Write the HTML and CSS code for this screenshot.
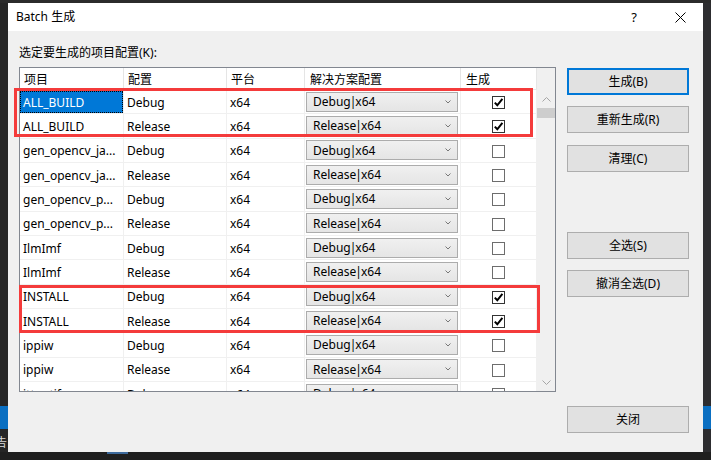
FILE: index.html
```html
<!DOCTYPE html>
<html lang="zh-CN">
<head>
<meta charset="utf-8">
<title>Batch 生成</title>
<link rel="stylesheet" href="styles.css">
</head>
<body>
<div class="screen">
  <div class="top-strip"></div>
  <div class="middle">
    <div class="side side-left"><div class="side-blue"></div><div class="side-glyph">告</div></div>
    <div class="dialog">
      <div class="titlebar">
        <span class="title">Batch 生成</span>
        <div class="title-buttons">
          <span class="tb-btn">?</span>
          <span class="tb-btn"><svg width="11" height="11" viewBox="0 0 11 11"><path d="M0.5 0.5 L10.5 10.5 M10.5 0.5 L0.5 10.5" stroke="#000" stroke-width="1" fill="none"/></svg></span>
        </div>
      </div>
      <div class="dialog-body">
        <div class="prompt">选定要生成的项目配置(K):</div>
        <div class="main">
          <div class="list">
            <div class="grid">
              <div class="row header">
                <div class="cell c1">项目</div><div class="cell c2">配置</div><div class="cell c3">平台</div><div class="cell c4 hpad">解决方案配置</div><div class="cell c5 hpad">生成</div>
              </div>
              <div class="row">
                <div class="cell c1 selected"><span class="focus">ALL_BUILD</span></div><div class="cell c2">Debug</div><div class="cell c3">x64</div>
                <div class="cell c4"><div class="combo"><span class="combo-text">Debug<span class="bar">|</span>x64</span><svg class="chev" width="6" height="4" viewBox="0 0 6 4"><polyline points="0.5,0.5 3,3 5.5,0.5" fill="none" stroke="#777" stroke-width="1"/></svg></div></div>
                <div class="cell c5"><span class="check on"><svg width="11" height="11" viewBox="0 0 11 11"><path d="M1.8 5.6 L4.3 8.3 L9.4 1.8" fill="none" stroke="#000" stroke-width="2"/></svg></span></div>
              </div>
              <div class="row">
                <div class="cell c1">ALL_BUILD</div><div class="cell c2">Release</div><div class="cell c3">x64</div>
                <div class="cell c4"><div class="combo"><span class="combo-text">Release<span class="bar">|</span>x64</span><svg class="chev" width="6" height="4" viewBox="0 0 6 4"><polyline points="0.5,0.5 3,3 5.5,0.5" fill="none" stroke="#777" stroke-width="1"/></svg></div></div>
                <div class="cell c5"><span class="check on"><svg width="11" height="11" viewBox="0 0 11 11"><path d="M1.8 5.6 L4.3 8.3 L9.4 1.8" fill="none" stroke="#000" stroke-width="2"/></svg></span></div>
              </div>
              <div class="row">
                <div class="cell c1">gen_opencv_ja...</div><div class="cell c2">Debug</div><div class="cell c3">x64</div>
                <div class="cell c4"><div class="combo"><span class="combo-text">Debug<span class="bar">|</span>x64</span><svg class="chev" width="6" height="4" viewBox="0 0 6 4"><polyline points="0.5,0.5 3,3 5.5,0.5" fill="none" stroke="#777" stroke-width="1"/></svg></div></div>
                <div class="cell c5"><span class="check"></span></div>
              </div>
              <div class="row">
                <div class="cell c1">gen_opencv_ja...</div><div class="cell c2">Release</div><div class="cell c3">x64</div>
                <div class="cell c4"><div class="combo"><span class="combo-text">Release<span class="bar">|</span>x64</span><svg class="chev" width="6" height="4" viewBox="0 0 6 4"><polyline points="0.5,0.5 3,3 5.5,0.5" fill="none" stroke="#777" stroke-width="1"/></svg></div></div>
                <div class="cell c5"><span class="check"></span></div>
              </div>
              <div class="row">
                <div class="cell c1">gen_opencv_p...</div><div class="cell c2">Debug</div><div class="cell c3">x64</div>
                <div class="cell c4"><div class="combo"><span class="combo-text">Debug<span class="bar">|</span>x64</span><svg class="chev" width="6" height="4" viewBox="0 0 6 4"><polyline points="0.5,0.5 3,3 5.5,0.5" fill="none" stroke="#777" stroke-width="1"/></svg></div></div>
                <div class="cell c5"><span class="check"></span></div>
              </div>
              <div class="row">
                <div class="cell c1">gen_opencv_p...</div><div class="cell c2">Release</div><div class="cell c3">x64</div>
                <div class="cell c4"><div class="combo"><span class="combo-text">Release<span class="bar">|</span>x64</span><svg class="chev" width="6" height="4" viewBox="0 0 6 4"><polyline points="0.5,0.5 3,3 5.5,0.5" fill="none" stroke="#777" stroke-width="1"/></svg></div></div>
                <div class="cell c5"><span class="check"></span></div>
              </div>
              <div class="row">
                <div class="cell c1">IlmImf</div><div class="cell c2">Debug</div><div class="cell c3">x64</div>
                <div class="cell c4"><div class="combo"><span class="combo-text">Debug<span class="bar">|</span>x64</span><svg class="chev" width="6" height="4" viewBox="0 0 6 4"><polyline points="0.5,0.5 3,3 5.5,0.5" fill="none" stroke="#777" stroke-width="1"/></svg></div></div>
                <div class="cell c5"><span class="check"></span></div>
              </div>
              <div class="row">
                <div class="cell c1">IlmImf</div><div class="cell c2">Release</div><div class="cell c3">x64</div>
                <div class="cell c4"><div class="combo"><span class="combo-text">Release<span class="bar">|</span>x64</span><svg class="chev" width="6" height="4" viewBox="0 0 6 4"><polyline points="0.5,0.5 3,3 5.5,0.5" fill="none" stroke="#777" stroke-width="1"/></svg></div></div>
                <div class="cell c5"><span class="check"></span></div>
              </div>
              <div class="row">
                <div class="cell c1">INSTALL</div><div class="cell c2">Debug</div><div class="cell c3">x64</div>
                <div class="cell c4"><div class="combo"><span class="combo-text">Debug<span class="bar">|</span>x64</span><svg class="chev" width="6" height="4" viewBox="0 0 6 4"><polyline points="0.5,0.5 3,3 5.5,0.5" fill="none" stroke="#777" stroke-width="1"/></svg></div></div>
                <div class="cell c5"><span class="check on"><svg width="11" height="11" viewBox="0 0 11 11"><path d="M1.8 5.6 L4.3 8.3 L9.4 1.8" fill="none" stroke="#000" stroke-width="2"/></svg></span></div>
              </div>
              <div class="row">
                <div class="cell c1">INSTALL</div><div class="cell c2">Release</div><div class="cell c3">x64</div>
                <div class="cell c4"><div class="combo"><span class="combo-text">Release<span class="bar">|</span>x64</span><svg class="chev" width="6" height="4" viewBox="0 0 6 4"><polyline points="0.5,0.5 3,3 5.5,0.5" fill="none" stroke="#777" stroke-width="1"/></svg></div></div>
                <div class="cell c5"><span class="check on"><svg width="11" height="11" viewBox="0 0 11 11"><path d="M1.8 5.6 L4.3 8.3 L9.4 1.8" fill="none" stroke="#000" stroke-width="2"/></svg></span></div>
              </div>
              <div class="row">
                <div class="cell c1">ippiw</div><div class="cell c2">Debug</div><div class="cell c3">x64</div>
                <div class="cell c4"><div class="combo"><span class="combo-text">Debug<span class="bar">|</span>x64</span><svg class="chev" width="6" height="4" viewBox="0 0 6 4"><polyline points="0.5,0.5 3,3 5.5,0.5" fill="none" stroke="#777" stroke-width="1"/></svg></div></div>
                <div class="cell c5"><span class="check"></span></div>
              </div>
              <div class="row">
                <div class="cell c1">ippiw</div><div class="cell c2">Release</div><div class="cell c3">x64</div>
                <div class="cell c4"><div class="combo"><span class="combo-text">Release<span class="bar">|</span>x64</span><svg class="chev" width="6" height="4" viewBox="0 0 6 4"><polyline points="0.5,0.5 3,3 5.5,0.5" fill="none" stroke="#777" stroke-width="1"/></svg></div></div>
                <div class="cell c5"><span class="check"></span></div>
              </div>
              <div class="row">
                <div class="cell c1">ittnotify</div><div class="cell c2">Debug</div><div class="cell c3">x64</div>
                <div class="cell c4"><div class="combo"><span class="combo-text">Debug<span class="bar">|</span>x64</span><svg class="chev" width="6" height="4" viewBox="0 0 6 4"><polyline points="0.5,0.5 3,3 5.5,0.5" fill="none" stroke="#777" stroke-width="1"/></svg></div></div>
                <div class="cell c5"><span class="check"></span></div>
              </div>
            </div>
            <div class="scrollbar">
              <div class="sb-head"></div>
              <div class="sb-btn"><svg width="9" height="5" viewBox="0 0 9 5"><polyline points="0.5,4.5 4.5,0.5 8.5,4.5" fill="none" stroke="#a6a6a6" stroke-width="1"/></svg></div>
              <div class="sb-thumb"></div>
              <div class="sb-track"></div>
              <div class="sb-btn"><svg width="9" height="5" viewBox="0 0 9 5"><polyline points="0.5,0.5 4.5,4.5 8.5,0.5" fill="none" stroke="#a6a6a6" stroke-width="1"/></svg></div>
            </div>
          </div>
          <div class="buttons">
            <div class="btn default">生成(B)</div>
            <div class="btn gap-11">重新生成(R)</div>
            <div class="btn gap-12">清理(C)</div>
            <div class="btn gap-60">全选(S)</div>
            <div class="btn gap-11">撤消全选(D)</div>
            <div class="btn gap-109">关闭</div>
          </div>
        </div>
      </div>
    </div>
    <div class="side side-right"><div class="side-blue"></div></div>
  </div>
  <div class="bottom-strip"><div class="bottom-blue"></div></div>
  <div class="mark mark-1"></div>
  <div class="mark mark-2"></div>
</div>
</body>
</html>
```

FILE: styles.css
```css
* { box-sizing: border-box; }

body {
  margin: 0;
  background: #2b2b2b;
}

.screen {
  position: relative;
  width: 711px;
  height: 460px;
  overflow: hidden;
  display: flex;
  flex-direction: column;
  background: #2b2b2b;
  font-family: "Noto Sans", "Noto Sans CJK SC", sans-serif;
  font-size: 12px;
  line-height: 16px;
  color: #000;
}

.top-strip {
  height: 3px;
  flex: none;
  background: #2b2b2b;
}

.middle {
  height: 449px;
  flex: none;
  display: flex;
}

.side {
  width: 8px;
  flex: none;
  overflow: hidden;
  padding-top: 403px;
  background: #262626;
}

.side-right { background: #2d2d30; }

.side-blue {
  height: 23px;
  background: #0a6fc2;
}

.side-glyph {
  margin-top: 7px;
  margin-left: -5px;
  width: 13px;
  color: #d8d8d8;
  font-size: 12px;
  line-height: 13px;
}

.dialog {
  width: 695px;
  flex: none;
  background: #f0f0f0;
  display: flex;
  flex-direction: column;
}

.titlebar {
  height: 28px;
  flex: none;
  background: #fff;
  display: flex;
  align-items: center;
  justify-content: space-between;
  padding-left: 8px;
}

.title {
  line-height: 16px;
}

.title-buttons {
  display: flex;
  height: 28px;
}

.tb-btn {
  width: 46px;
  height: 28px;
  display: flex;
  align-items: center;
  justify-content: center;
  font-size: 13px;
}

.dialog-body {
  padding: 14px 13px 0 11px;
}

.prompt {
  height: 16px;
  line-height: 16px;
  margin-bottom: 6px;
}

.main {
  display: flex;
  align-items: flex-start;
  gap: 11px;
}

.list {
  width: 537px;
  height: 325px;
  border: 1px solid #828790;
  background: #fff;
  display: flex;
  overflow: hidden;
}

.grid {
  width: 517px;
  flex: none;
  overflow: hidden;
}

.row {
  display: flex;
  height: 24.33px;
  border-bottom: 1px solid #f0f0f0;
}

.row.header {
  height: 22px;
  border-bottom: 1px solid #e8e8e8;
}

.cell {
  flex: none;
  border-right: 1px solid #f0f0f0;
  display: flex;
  align-items: center;
  padding-left: 3px;
  padding-top: 2px;
  white-space: nowrap;
  overflow: hidden;
}

.header .cell {
  border-right-color: #e5e5e5;
  padding-left: 4px;
  padding-top: 2px;
}

.header .hpad { padding-left: 5px; }

.header .c5 { justify-content: flex-start; }

.c1 { width: 104px; }
.c2 { width: 103px; }
.c3 { width: 78px; }
.c4 { width: 156px; padding-left: 1px; padding-top: 0; }
.c5 { width: 76px; justify-content: center; padding-left: 0; padding-top: 2px; }

.cell.selected {
  padding: 0;
  align-items: stretch;
}

.focus {
  flex: 1;
  margin-top: 1px;
  background: #0078d7;
  color: #fff;
  border: 1px dotted #000;
  display: flex;
  align-items: center;
  padding-left: 2px;
  padding-top: 2px;
}

.combo {
  width: 152px;
  height: 20px;
  border: 1px solid #acacac;
  background: linear-gradient(#f0f0f0, #e5e5e5);
  display: flex;
  align-items: center;
  justify-content: space-between;
  padding: 1px 6px 0 6px;
}

.bar {
  margin: 0 -1px;
}

.chev { display: block; margin-top: -1px; }

.check {
  width: 13px;
  height: 13px;
  border: 1px solid #6d6d6d;
  background: #fff;
  display: flex;
  align-items: center;
  justify-content: center;
}

.check.on { border-color: #333; }

.check svg { display: block; }

.scrollbar {
  width: 18px;
  flex: none;
  background: #f0f0f0;
  display: flex;
  flex-direction: column;
}

.sb-head { height: 22px; flex: none; }

.sb-btn {
  height: 18px;
  flex: none;
  display: flex;
  align-items: center;
  justify-content: center;
}

.sb-btn svg { display: block; }

.sb-thumb {
  height: 10px;
  flex: none;
  background: #cdcdcd;
}

.sb-track { flex: 1; }

.buttons {
  width: 122px;
  flex: none;
  display: flex;
  flex-direction: column;
  padding-top: 1px;
}

.btn {
  height: 27px;
  border: 1px solid #adadad;
  background: #e1e1e1;
  display: flex;
  align-items: center;
  justify-content: center;
  padding-top: 1px;
}

.btn.default {
  border: 2px solid #0078d7;
}

.gap-11 { margin-top: 11px; }
.gap-12 { margin-top: 12px; }
.gap-60 { margin-top: 60px; }
.gap-109 { margin-top: 109px; }

.bottom-strip {
  height: 8px;
  flex: none;
  background: #1f1f1f;
  padding-left: 107px;
}

.bottom-blue {
  width: 21px;
  height: 2px;
  background: #3d6a9c;
}

.mark {
  position: absolute;
  border: 3px solid #f43b3b;
}

.mark-1 {
  left: 14px;
  top: 88px;
  width: 519px;
  height: 49px;
}

.mark-2 {
  left: 19px;
  top: 285px;
  width: 521px;
  height: 48px;
}
```
